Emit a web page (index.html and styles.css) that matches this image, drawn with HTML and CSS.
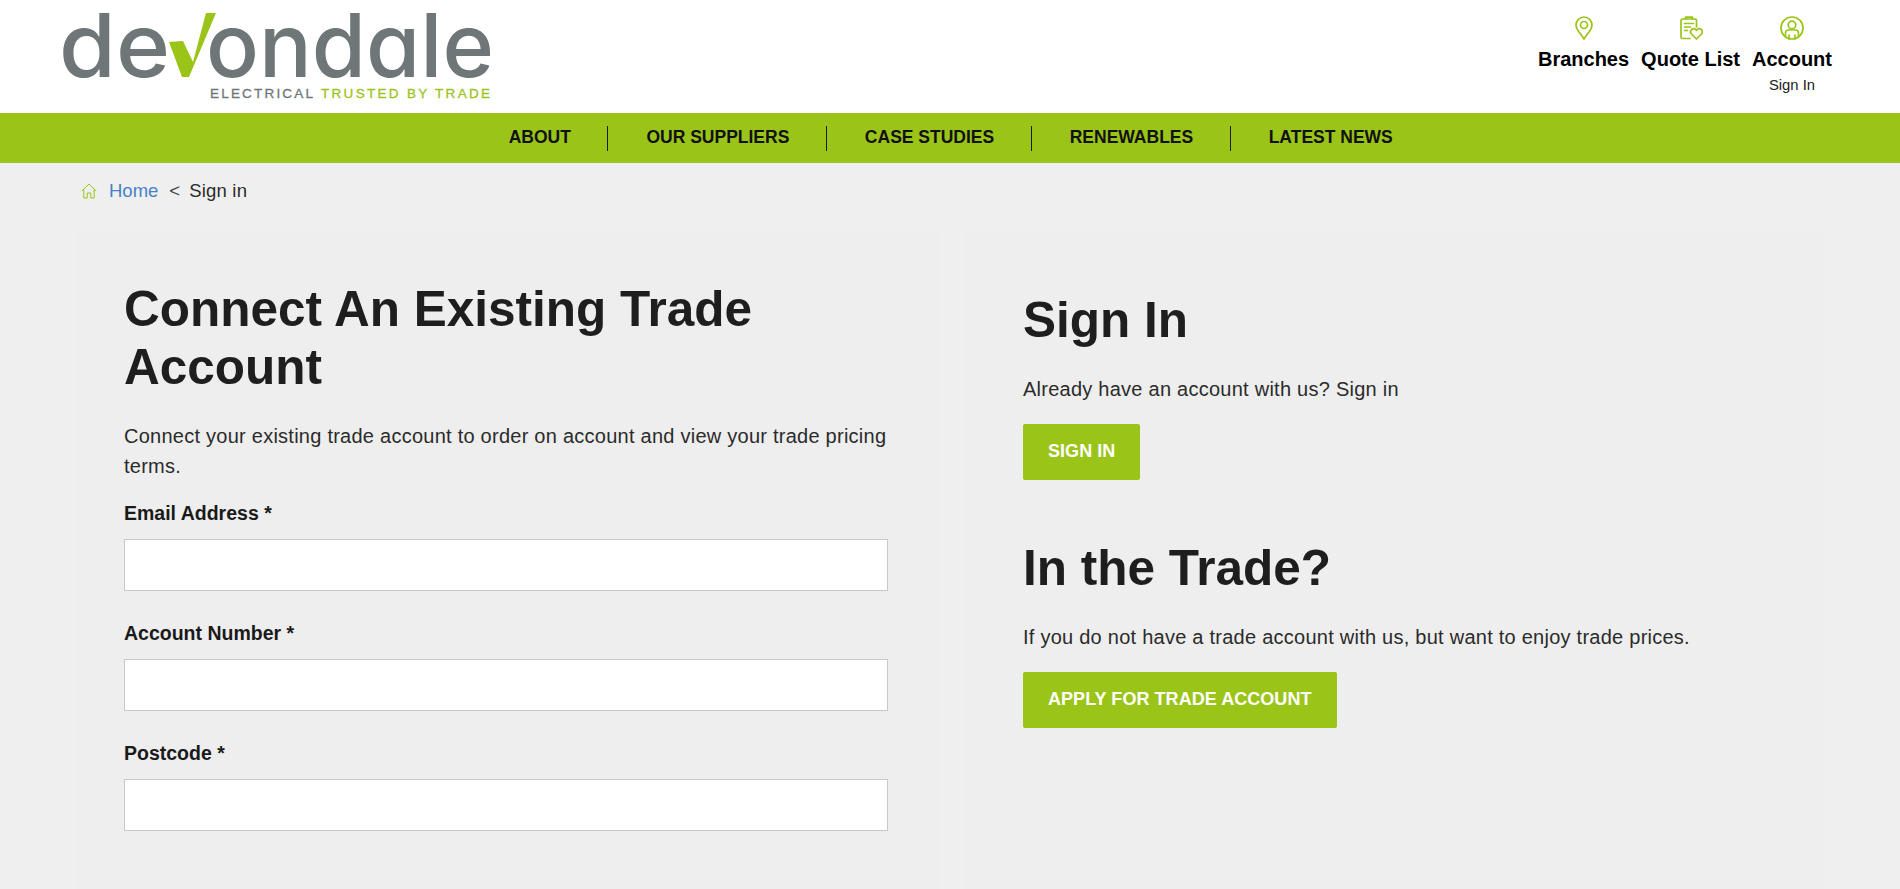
FILE: index.html
```html
<!DOCTYPE html>
<html lang="en">
<head>
<meta charset="utf-8">
<title>Sign in - Devondale Electrical</title>
<link rel="stylesheet" href="styles.css">
</head>
<body>
<header class="site-header">
  <a class="logo" href="#" aria-label="Devondale Electrical">
    <svg width="440" height="113" viewBox="60 0 440 113">
      <text class="logo-word" x="59" y="77" textLength="111" lengthAdjust="spacingAndGlyphs">de</text>
      <text class="logo-word" x="206" y="77" textLength="288" lengthAdjust="spacingAndGlyphs">ondale</text>
      <polygon class="logo-tick" points="169,42 183,41 193,62 206,13 216,13 189,77 182,77"/>
      <text class="logo-tag" x="210" y="98" textLength="103">ELECTRICAL</text>
      <text class="logo-tag logo-tag-green" x="321" y="98" textLength="169">TRUSTED BY TRADE</text>
    </svg>
  </a>
  <nav class="quick-links">
    <a class="quick-link" href="#">
      <svg class="quick-icon" viewBox="0 0 24 24"><path d="M12 23C8.500 17.500 4 13.500 4 9a8 8 0 0 1 16 0c0 4.500-4.500 8.500-8 14z"/><circle cx="12" cy="9" r="3.500"/></svg>
      <span class="quick-label">Branches</span>
    </a>
    <a class="quick-link" href="#">
      <svg class="quick-icon" viewBox="0 0 24 24"><path d="M11 22.500H3.500A1.500 1.500 0 0 1 2 21V4.500A1.500 1.500 0 0 1 3.500 3H16a1.500 1.500 0 0 1 1.500 1.500V11"/><path d="M6.500 3V1.200h7V3"/><path d="M5.500 7.500h9M5.500 11h6M5.500 14.500h3"/><path d="M17.500 23l-5-5a3 3 0 0 1 4.300-4.300l.7.700.7-.7a3 3 0 0 1 4.300 4.300z"/></svg>
      <span class="quick-label">Quote List</span>
    </a>
    <a class="quick-link" href="#">
      <svg class="quick-icon" viewBox="0 0 24 24"><circle cx="12" cy="12" r="11"/><circle cx="12" cy="9" r="3.800"/><path d="M5.500 20.500V17a3 3 0 0 1 3-3h7a3 3 0 0 1 3 3v3.500"/><path d="M9 19v3.800M15 19v3.800"/></svg>
      <span class="quick-label">Account</span>
      <span class="quick-sub">Sign In</span>
    </a>
  </nav>
</header>

<nav class="main-nav">
  <a class="nav-item" href="#">About</a>
  <a class="nav-item" href="#">Our Suppliers</a>
  <a class="nav-item" href="#">Case Studies</a>
  <a class="nav-item" href="#">Renewables</a>
  <a class="nav-item" href="#">Latest News</a>
</nav>

<main class="page">
  <div class="breadcrumb">
    <svg class="home-icon" viewBox="0 0 16 16"><path d="M.8 8 8 1l7.200 7M2.800 6.500V15h3.400v-5h3.600v5h3.400V6.500"/></svg>
    <a class="crumb-link" href="#">Home</a>
    <span class="crumb-sep">&lt;</span>
    <span class="crumb-current">Sign in</span>
  </div>
  <div class="columns">
    <section class="card card-left">
      <h1 class="title">Connect An Existing Trade Account</h1>
      <p class="lead">Connect your existing trade account to order on account and view your trade pricing terms.</p>
      <form class="form">
        <label class="field">
          <span class="field-label">Email Address *</span>
          <input class="input" type="text">
        </label>
        <label class="field">
          <span class="field-label">Account Number *</span>
          <input class="input" type="text">
        </label>
        <label class="field">
          <span class="field-label">Postcode *</span>
          <input class="input" type="text">
        </label>
      </form>
    </section>
    <section class="card card-right">
      <div class="block">
        <h2 class="title">Sign In</h2>
        <p class="block-text">Already have an account with us? Sign in</p>
        <a class="btn" href="#">Sign In</a>
      </div>
      <div class="block">
        <h2 class="title">In the Trade?</h2>
        <p class="block-text">If you do not have a trade account with us, but want to enjoy trade prices.</p>
        <a class="btn" href="#">Apply For Trade Account</a>
      </div>
    </section>
  </div>
</main>
</body>
</html>
```
FILE: styles.css
```css
* { box-sizing: border-box; }
html, body { margin: 0; height: 100%; }
body {
  height: 889px;
  overflow: hidden;
  background: #efefef;
  color: #2b2b2b;
  font-family: "Liberation Sans", Arial, sans-serif;
  font-size: 20px;
  line-height: 30px;
  letter-spacing: 0.25px;
}
a { text-decoration: none; color: inherit; }

.site-header {
  height: 113px;
  background: #ffffff;
  display: flex;
  justify-content: space-between;
  padding: 0 62px 0 60px;
}
.logo { display: block; height: 113px; }
.logo svg { display: block; }
.logo-word {
  font-family: Inter, "Liberation Sans", sans-serif;
  font-feature-settings: "cv11" 1;
  font-size: 88px;
  font-weight: 500;
  letter-spacing: 0;
  fill: #6f7678;
}
.logo-tick { fill: #9bc419; }
.logo-tag {
  font-family: "Liberation Sans", Arial, sans-serif;
  font-size: 13.500px;
  letter-spacing: 0;
  fill: #6f7678;
  stroke: #6f7678;
  stroke-width: 0.3px;
}
.logo-tag-green { fill: #9bc419; stroke: #9bc419; }

.quick-links { display: flex; padding-top: 16px; }
.quick-link {
  display: flex;
  flex-direction: column;
  align-items: center;
  padding: 0 6px;
  color: #000000;
}
.quick-icon {
  width: 24px;
  height: 24px;
  fill: none;
  stroke: #9bc419;
  stroke-width: 1.700;
  stroke-linecap: round;
  stroke-linejoin: round;
}
.quick-label {
  font-weight: 700;
  font-size: 20px;
  line-height: 22px;
  letter-spacing: 0;
  margin-top: 8px;
}
.quick-sub {
  font-size: 14.800px;
  line-height: 18px;
  letter-spacing: 0;
  margin-top: 6px;
  color: #222222;
}

.main-nav {
  height: 50px;
  background: #9bc419;
  display: flex;
  justify-content: center;
  align-items: center;
}
.nav-item {
  padding: 0 36.500px 0 38px;
  border-right: 1px solid #1b1b1b;
  height: 25px;
  line-height: 23px;
  font-size: 17.500px;
  font-weight: 700;
  letter-spacing: 0;
  text-transform: uppercase;
  color: #111111;
}
.nav-item:last-child { border-right: 0; }

.page { padding: 0 74px 0 76px; }
.breadcrumb {
  display: flex;
  align-items: center;
  height: 69px;
  padding: 0 0 14px 5px;
  font-size: 18.500px;
  letter-spacing: 0;
}
.home-icon {
  width: 16px;
  height: 16px;
  margin-right: 12px;
  fill: none;
  stroke: #9bc419;
  stroke-width: 1;
}
.crumb-link { color: #4a7fc9; }
.crumb-sep { margin: 0 9px 0 11px; color: #444444; }
.crumb-current { letter-spacing: 0.2px; }

.columns { display: grid; grid-template-columns: 864px 861px; column-gap: 25px; }
.card { background: #eeeeee; min-height: 700px; }
.card-left { padding: 48px 52px 0 48px; }
.card-right { padding: 59px 48px 0 58px; }

.title {
  margin: 0;
  font-size: 49.500px;
  line-height: 58px;
  font-weight: 700;
  letter-spacing: 0;
  color: #1e1e1e;
}
.lead { margin: 25px 0 17px; }
.field { display: block; margin-bottom: 27px; }
.field-label {
  display: block;
  font-size: 19.500px;
  font-weight: 700;
  letter-spacing: 0;
  color: #1a1a1a;
  margin-bottom: 11px;
}
.input {
  display: block;
  width: 100%;
  height: 52px;
  border: 1px solid #c8c8c8;
  background: #ffffff;
  border-radius: 0;
  padding: 0 12px;
}
.block { margin-bottom: 59px; }
.block-text { margin: 25px 0 20px; }
.btn {
  display: inline-block;
  height: 56px;
  line-height: 55px;
  padding: 0 25px;
  background: #9bc419;
  color: #ffffff;
  border-radius: 2px;
  font-size: 18px;
  font-weight: 700;
  letter-spacing: 0.05px;
  text-transform: uppercase;
}
```
